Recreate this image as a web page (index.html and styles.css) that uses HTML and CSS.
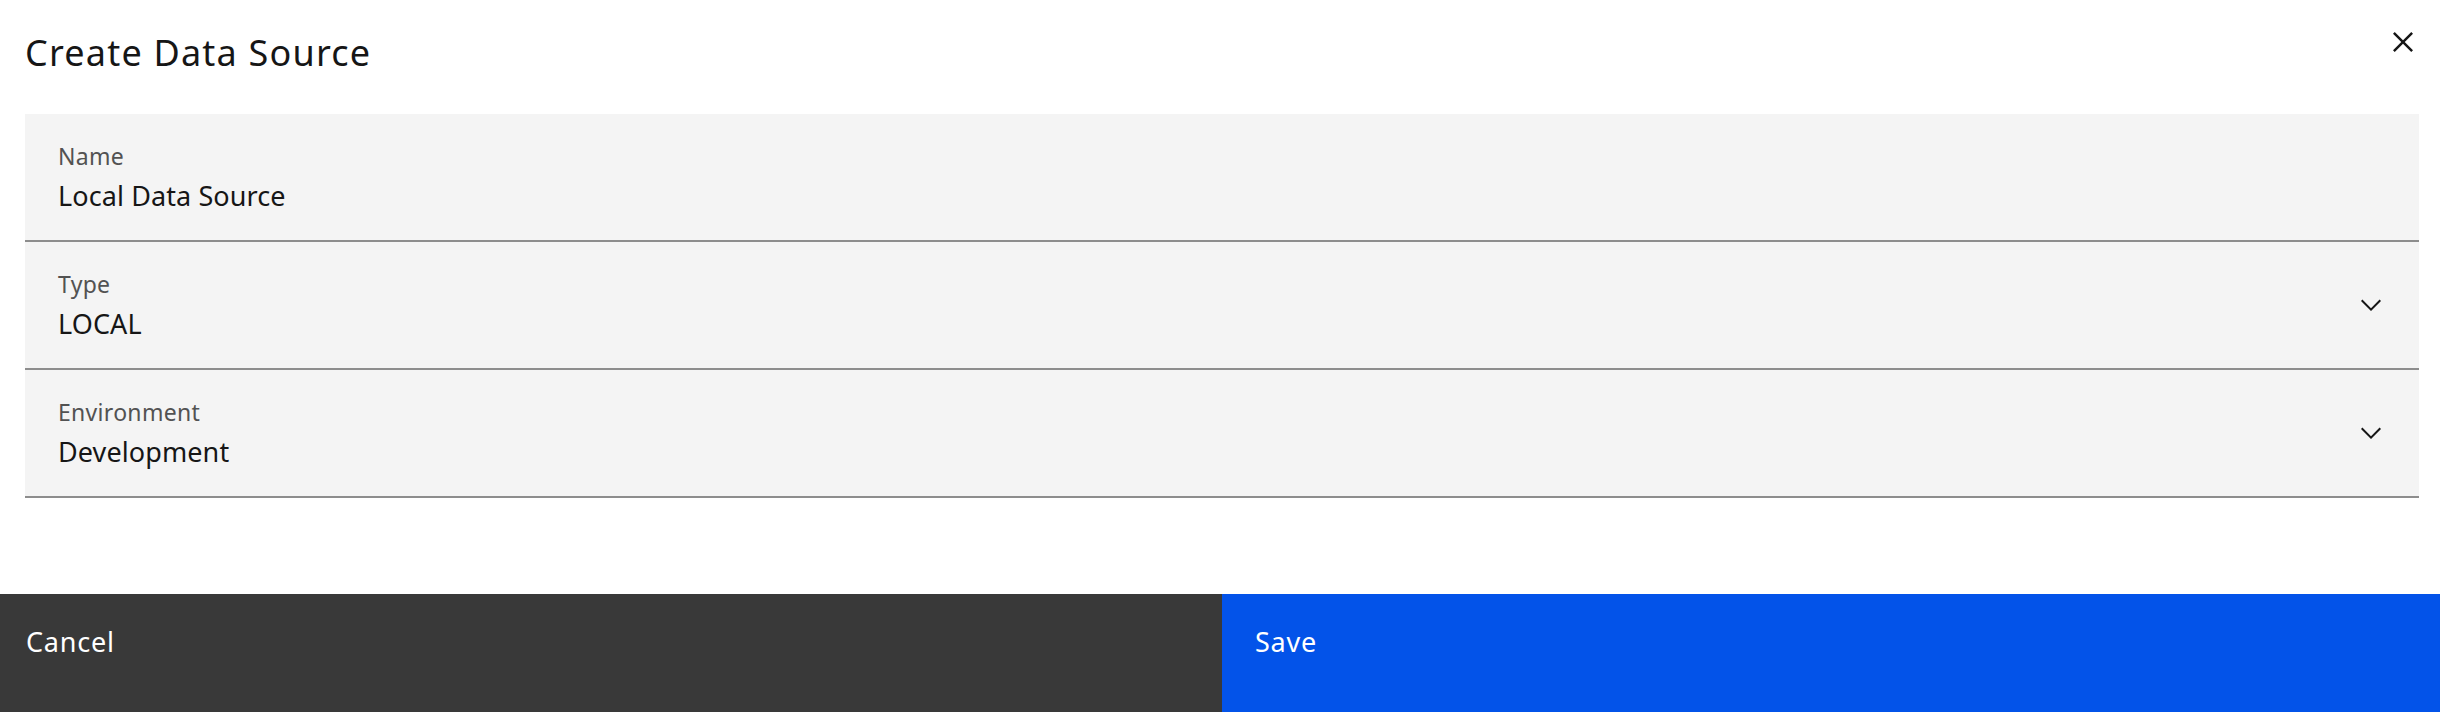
FILE: index.html
```html
<!DOCTYPE html>
<html lang="en">
<head>
<meta charset="utf-8">
<title>Create Data Source</title>
<link rel="stylesheet" href="styles.css">
</head>
<body>
<div class="modal">
  <header class="modal-header">
    <h2 class="modal-title">Create Data Source</h2>
    <button class="close-btn" aria-label="Close">
      <svg class="close-icon" viewBox="0 0 32 32" width="40" height="40"><path d="M24 9.4L22.6 8 16 14.6 9.4 8 8 9.4 14.6 16 8 22.6 9.4 24 16 17.4 22.6 24 24 22.6 17.4 16 24 9.4z"/></svg>
    </button>
  </header>
  <div class="form">
    <div class="field">
      <div class="field-text">
        <span class="field-label">Name</span>
        <span class="field-value">Local Data Source</span>
      </div>
    </div>
    <div class="field">
      <div class="field-text">
        <span class="field-label">Type</span>
        <span class="field-value">LOCAL</span>
      </div>
      <svg class="chevron" viewBox="0 0 16 16" width="32" height="32"><path d="M8 11L3 6 3.7 5.3 8 9.6 12.3 5.3 13 6z"/></svg>
    </div>
    <div class="field">
      <div class="field-text">
        <span class="field-label">Environment</span>
        <span class="field-value">Development</span>
      </div>
      <svg class="chevron" viewBox="0 0 16 16" width="32" height="32"><path d="M8 11L3 6 3.7 5.3 8 9.6 12.3 5.3 13 6z"/></svg>
    </div>
  </div>
  <footer class="modal-footer">
    <button class="btn btn-secondary">Cancel</button>
    <button class="btn btn-primary">Save</button>
  </footer>
</div>
</body>
</html>
```

FILE: styles.css
```css
* { box-sizing: border-box; }

html, body {
  margin: 0;
  padding: 0;
  background: #ffffff;
  height: 100%;
  overflow: hidden;
}

body {
  font-family: "Noto Sans", "Open Sans", sans-serif;
  color: #161616;
}

.modal {
  height: 100vh;
  display: flex;
  flex-direction: column;
}

.modal-header {
  display: flex;
  justify-content: space-between;
  align-items: flex-start;
  padding: 0 17px 0 25px;
  height: 114px;
}

.modal-title {
  margin: 0;
  padding-top: 31px;
  font-size: 36px;
  line-height: 44px;
  font-weight: 400;
  letter-spacing: 1.2px;
  color: #161616;
}

.close-btn {
  margin-top: 22px;
  padding: 0;
  border: 0;
  background: transparent;
  display: flex;
}

.close-icon { fill: #161616; }

.form {
  margin: 0 21px 0 25px;
  display: flex;
  flex-direction: column;
}

.field {
  height: 128px;
  background: #f4f4f4;
  border-bottom: 2px solid #8d8d8d;
  display: flex;
  align-items: center;
  justify-content: space-between;
  padding: 0 32px 0 33px;
}

.field-text {
  display: flex;
  flex-direction: column;
  align-self: flex-start;
  padding-top: 26px;
  gap: 6px;
}

.field-label {
  font-size: 23px;
  line-height: 32px;
  color: #525252;
  letter-spacing: 0.3px;
}

.field-value {
  font-size: 27px;
  line-height: 36px;
  color: #161616;
  letter-spacing: 0.1px;
}

.chevron { fill: #161616; }

.modal-footer {
  margin-top: auto;
  height: 118px;
  display: grid;
  grid-template-columns: 1222px 1fr;
}

.btn {
  border: 0;
  margin: 0;
  font-family: inherit;
  font-size: 27px;
  line-height: 36px;
  letter-spacing: 0.8px;
  color: #ffffff;
  text-align: left;
  display: flex;
  align-items: flex-start;
  padding-top: 30px;
}

.btn-secondary {
  background: #393939;
  padding-left: 26px;
}

.btn-primary {
  background: #0353e9;
  padding-left: 33px;
}
```
